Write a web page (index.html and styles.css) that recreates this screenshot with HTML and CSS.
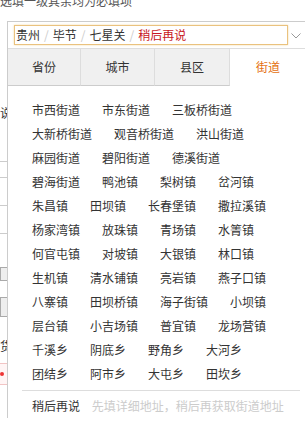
FILE: index.html
```
<!DOCTYPE html>
<html lang="zh-CN">

<head>
    <meta charset="UTF-8">
    <meta name="viewport" content="width=device-width, initial-scale=1.0">
    <title>地址选择</title>
    <link rel="stylesheet" href="styles.css">
</head>

<body>
    <div class="top-tip">选填一级其余均为必填项</div>

    <div class="area-row">
        <!-- page content that sits under the popup -->
        <div class="under">
            <div class="under-char">说</div>
            <div class="under-line line-a"></div>
            <div class="under-line line-b"></div>
            <div class="under-line line-c"></div>
            <div class="under-line line-d"></div>
            <div class="under-box box-a"></div>
            <div class="under-box box-b"></div>
            <div class="under-char char-b">货</div>
            <div class="under-red"><span></span></div>
        </div>

        <div class="picker">
            <div class="picker-head">
                <div class="picker-input">
                    <span>贵州</span><i>/</i><span>毕节</span><i>/</i><span>七星关</span><i>/</i><span class="later-red">稍后再说</span>
                </div>
                <svg class="arrow" width="10" height="6" viewBox="0 0 10 6">
                    <polyline points="0.5,0.5 5,5 9.5,0.5" fill="none" stroke="#999" stroke-width="1" />
                </svg>
            </div>

            <div class="tabs">
                <div class="tab tab-1">省份</div>
                <div class="tab tab-2">城市</div>
                <div class="tab tab-3">县区</div>
                <div class="tab active">街道</div>
            </div>

            <div class="list">
                <a>市西街道</a><a>市东街道</a><a>三板桥街道</a>
                <a>大新桥街道</a><a>观音桥街道</a><a>洪山街道</a>
                <a>麻园街道</a><a>碧阳街道</a><a>德溪街道</a>
                <a>碧海街道</a><a>鸭池镇</a><a>梨树镇</a><a>岔河镇</a>
                <a>朱昌镇</a><a>田坝镇</a><a>长春堡镇</a><a>撒拉溪镇</a>
                <a>杨家湾镇</a><a>放珠镇</a><a>青场镇</a><a>水箐镇</a>
                <a>何官屯镇</a><a>对坡镇</a><a>大银镇</a><a>林口镇</a>
                <a>生机镇</a><a>清水铺镇</a><a>亮岩镇</a><a>燕子口镇</a>
                <a>八寨镇</a><a>田坝桥镇</a><a>海子街镇</a><a>小坝镇</a>
                <a>层台镇</a><a>小吉场镇</a><a>普宜镇</a><a>龙场营镇</a>
                <a>千溪乡</a><a>阴底乡</a><a>野角乡</a><a>大河乡</a>
                <a>团结乡</a><a>阿市乡</a><a>大屯乡</a><a>田坎乡</a>
            </div>

            <div class="later">
                <a>稍后再说</a>
                <span class="later-tip">先填详细地址，稍后再获取街道地址</span>
            </div>
        </div>
    </div>
</body>

</html>
```

FILE: styles.css
```
body {
    margin: 0;
    padding: 0;
    background-color: #fff;
    font-family: "Noto Sans CJK SC", "Liberation Sans", sans-serif;
    font-size: 12px;
    color: #333;
    width: 305px;
    height: 429px;
    overflow: hidden;
}

.top-tip {
    height: 26px;
    margin-top: -5px;
    line-height: 12px;
    color: #555;
    white-space: nowrap;
}

.area-row {
    display: flex;
    align-items: flex-start;
}

/* bits of the page below, only the left 7px show */
.under {
    width: 7px;
    flex-shrink: 0;
    overflow: hidden;
    display: flex;
    flex-direction: column;
}

.under-char {
    margin-top: 85px;
    line-height: 14px;
    white-space: nowrap;
    color: #333;
}

.under-line {
    height: 1px;
    background-color: #ccc;
}

.line-a {
    margin-top: 41px;
}

.line-b {
    margin-top: 15px;
}

.line-c {
    margin-top: 27px;
}

.line-d {
    margin-top: 27px;
}

.under-box {
    border: 1px solid #aaa;
    background-color: #eee;
    width: 20px;
}

.box-a {
    margin-top: 33px;
    height: 12px;
}

.box-b {
    margin-top: 16px;
    height: 18px;
}

.char-b {
    margin-top: 22px;
}

.under-red {
    margin-top: 10px;
    height: 20px;
    border-top: 1px solid #f2c4c4;
    border-bottom: 1px solid #f2c4c4;
    background-color: #fff5f5;
    display: flex;
    align-items: center;
}

.under-red span {
    width: 4px;
    height: 4px;
    border-radius: 2px;
    background-color: #e33;
}

.picker {
    width: 310px;
    flex-shrink: 0;
    border-top: 1px solid #ccc;
    border-left: 1px solid #ccc;
    background-color: #fff;
}

.picker-head {
    display: flex;
    align-items: center;
    height: 26px;
    padding-left: 6px;
}

.picker-input {
    width: 271px;
    height: 18px;
    line-height: 18px;
    border: 1px solid #eac27e;
    box-shadow: 0 0 2px #f2d9a8;
    padding-left: 1px;
    white-space: nowrap;
    overflow: hidden;
    color: #333;
}

.picker-input i {
    font-style: normal;
    color: #ccc;
    margin: 0 4px;
}

.later-red {
    color: #c81623;
}

.arrow {
    margin-left: 3px;
    margin-top: 1px;
}

.tabs {
    display: flex;
    border-top: 1px solid #ddd;
}

.tab {
    height: 36px;
    line-height: 36px;
    text-align: center;
    background-color: #f0f0f0;
    border-right: 1px solid #ddd;
    border-bottom: 1px solid #ccc;
}

.tab-1 {
    width: 72px;
}

.tab-2 {
    width: 73px;
}

.tab-3 {
    width: 74px;
}

.tab.active {
    width: 76px;
    background-color: #fff;
    border-right: none;
    border-bottom-color: #fff;
    color: #e4700f;
}

.list {
    width: 250px;
    padding: 12px 0 0 24px;
    display: flex;
    flex-wrap: wrap;
    column-gap: 22px;
}

.list a {
    line-height: 24px;
    white-space: nowrap;
    color: #333;
    cursor: pointer;
}

.later {
    margin: 4px 0 0 14px;
    width: 268px;
    border-top: 1px solid #ddd;
    padding: 3px 0 0 10px;
    line-height: 24px;
    white-space: nowrap;
}

.later a {
    color: #333;
}

.later-tip {
    margin-left: 9px;
    color: #ccc;
}
```
